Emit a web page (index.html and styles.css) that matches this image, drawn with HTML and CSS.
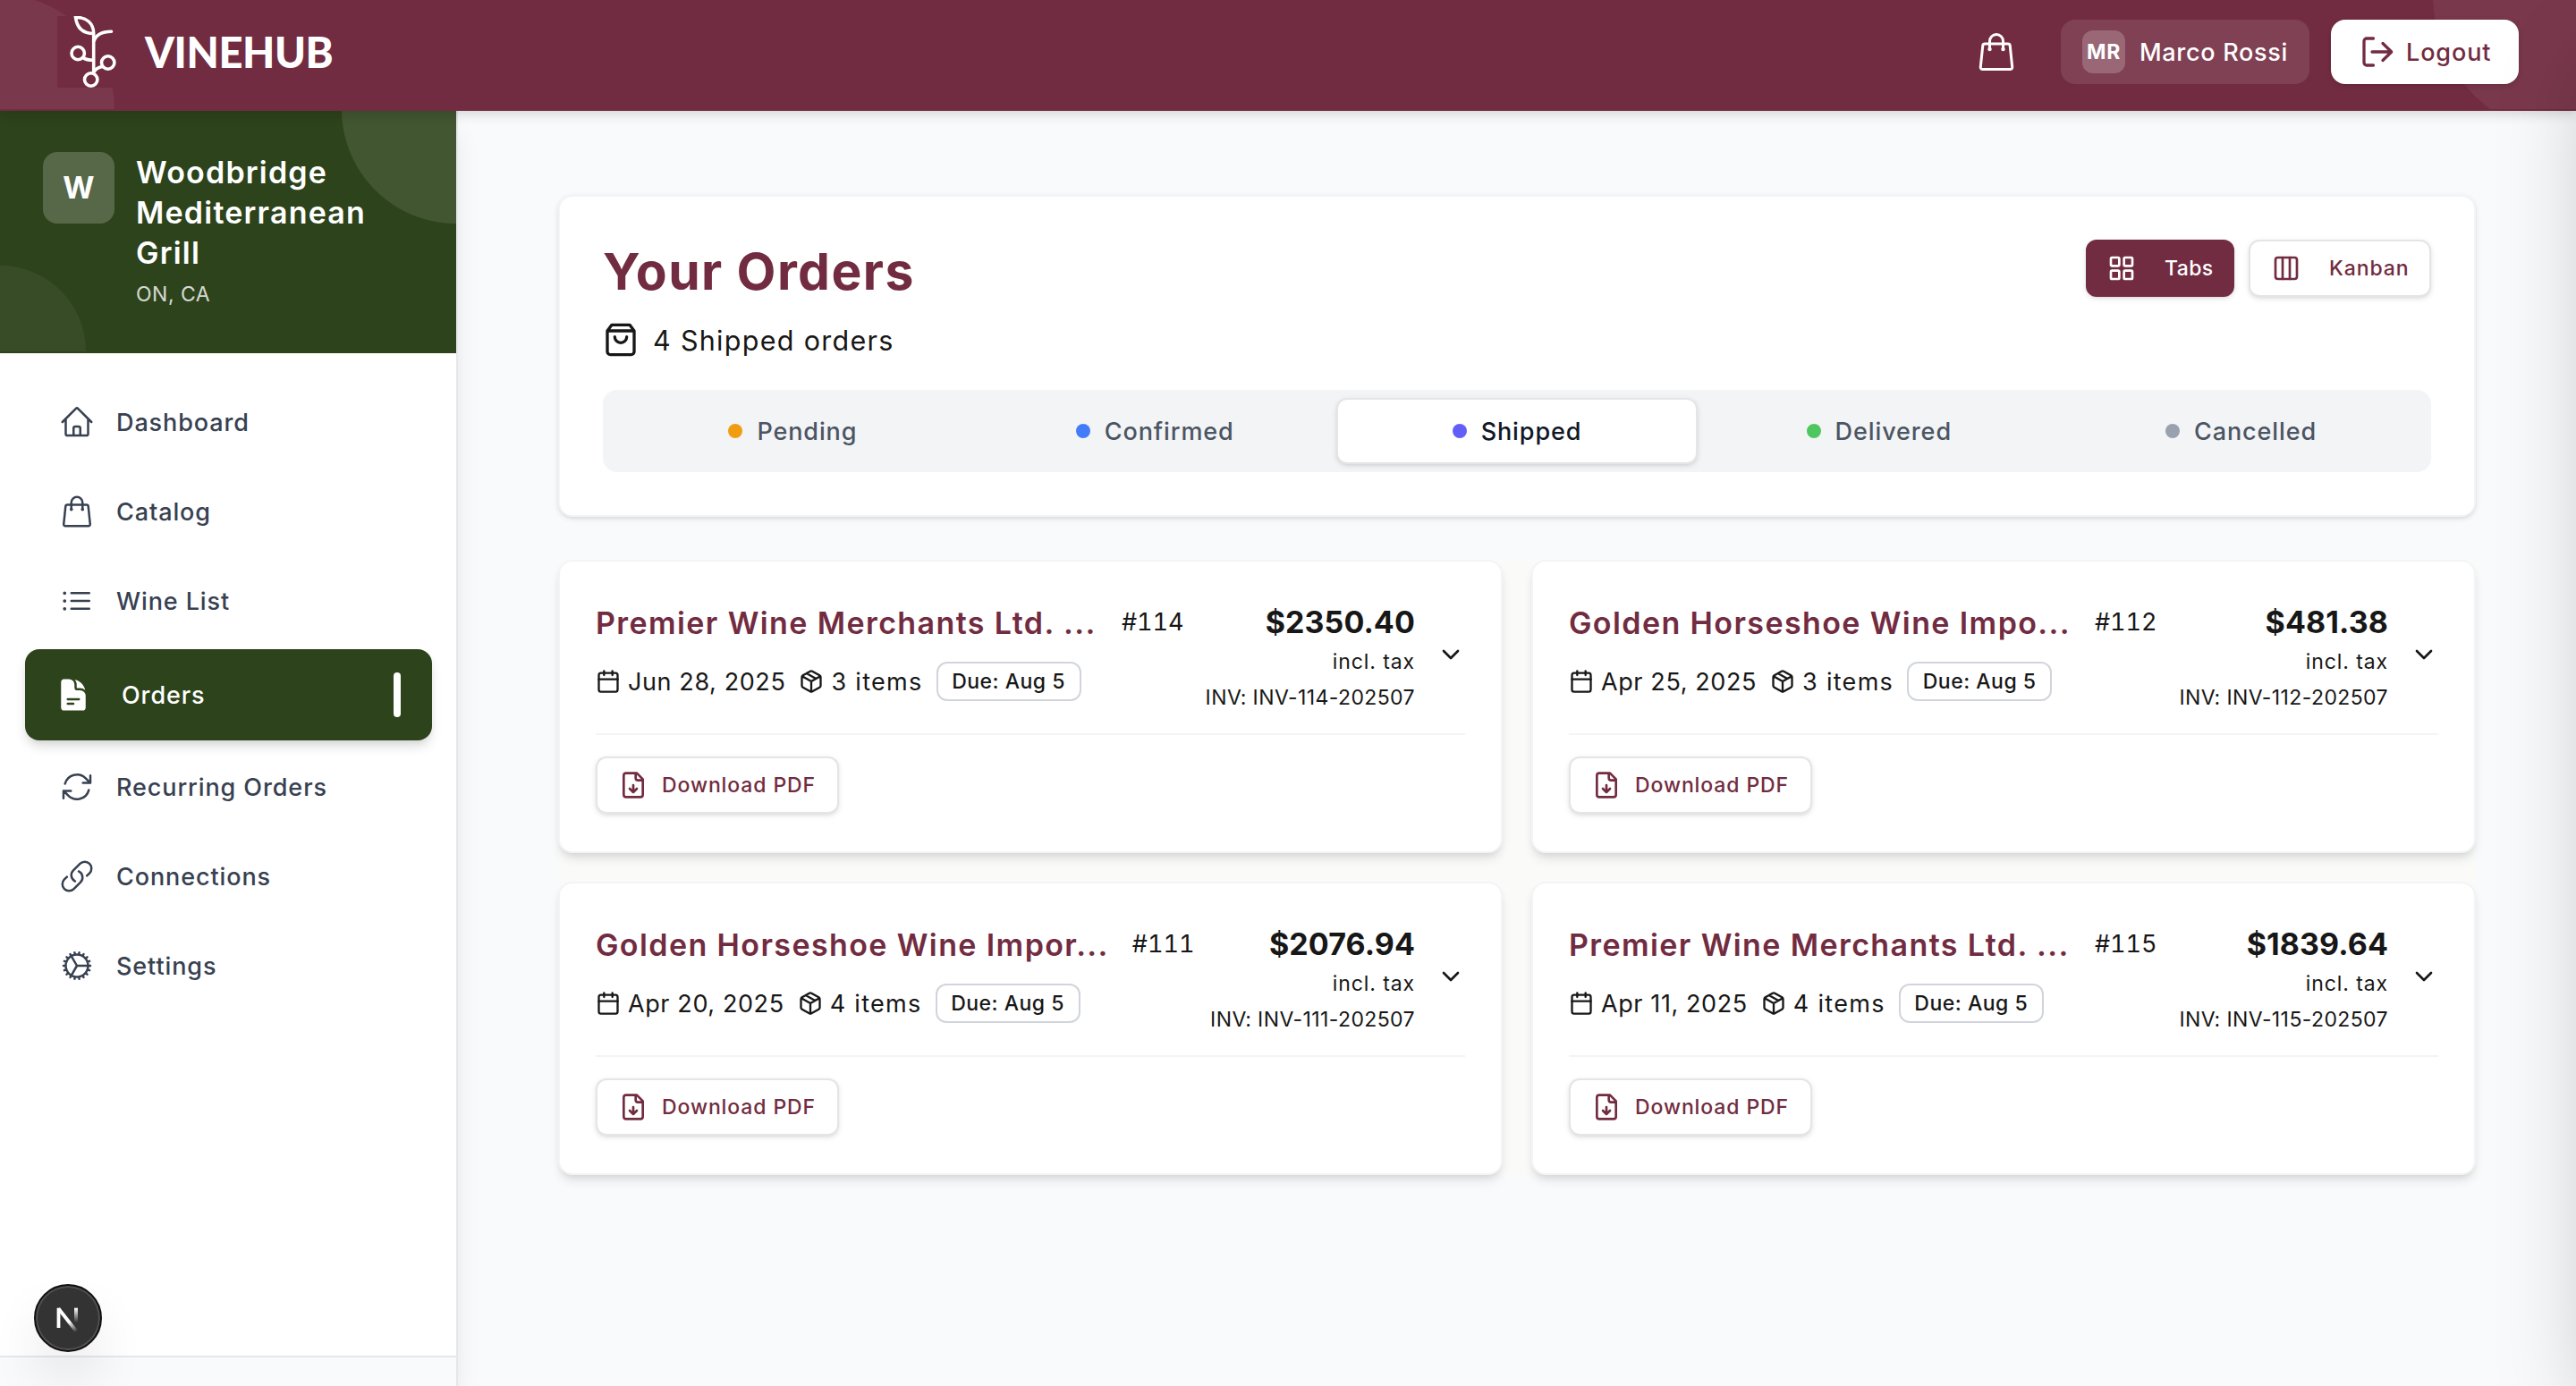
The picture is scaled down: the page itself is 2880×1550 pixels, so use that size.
FILE: index.html
```html
<!DOCTYPE html>
<html lang="en">
<head>
  <meta charset="UTF-8" />
  <meta name="viewport" content="width=device-width, initial-scale=1.0"/>
  <title>VineHub - Your Orders</title>
  <link rel="stylesheet" href="styles.css">
</head>
<body>
  <!-- shared icons -->
  <svg class="sprite" aria-hidden="true">
    <symbol id="i-bag" viewBox="0 0 24 24"><path d="M15.75 10.5V6a3.75 3.75 0 1 0-7.5 0v4.5m11.356-1.993 1.263 12c.07.665-.45 1.243-1.119 1.243H4.25a1.125 1.125 0 0 1-1.12-1.243l1.264-12A1.125 1.125 0 0 1 5.513 7.5h12.974c.576 0 1.059.435 1.119 1.007ZM8.625 10.5a.375.375 0 1 1-.75 0 .375.375 0 0 1 .75 0Zm7.5 0a.375.375 0 1 1-.75 0 .375.375 0 0 1 .75 0Z"/></symbol>
    <symbol id="i-calendar" viewBox="0 0 24 24"><path d="M8 2v4M16 2v4M3 10h18"/><rect x="3" y="4" width="18" height="18" rx="2"/></symbol>
    <symbol id="i-package" viewBox="0 0 24 24"><path d="M11 21.73a2 2 0 0 0 2 0l7-4A2 2 0 0 0 21 16V8a2 2 0 0 0-1-1.73l-7-4a2 2 0 0 0-2 0l-7 4A2 2 0 0 0 3 8v8a2 2 0 0 0 1 1.73zM12 22V12M3.3 7l8.7 5 8.7-5M7.5 4.27l9 5.15"/></symbol>
    <symbol id="i-chevron" viewBox="0 0 24 24"><path d="m6 9 6 6 6-6"/></symbol>
    <symbol id="i-file-down" viewBox="0 0 24 24"><path d="M15 2H6a2 2 0 0 0-2 2v16a2 2 0 0 0 2 2h12a2 2 0 0 0 2-2V7ZM14 2v4a2 2 0 0 0 2 2h4M12 18v-6M9 15l3 3 3-3"/></symbol>
  </svg>

  <header class="topbar">
    <div class="brand">
      <svg class="brand-logo" viewBox="0 0 80 80">
        <path d="M20.5 1.5C22 13 29 19.5 40.7 19.5 40.7 8 32.5 1 20.5 1.5ZM40.7 19V63M40.7 29C43 21 50 17.3 60.5 17.3M29 46.5C32 49 36 49.3 40.7 49.3M50.5 56.5C47 57 43 59 41 62.5"/>
        <circle cx="23.2" cy="41.5" r="7.2"/>
        <circle cx="56.7" cy="52" r="7.2"/>
        <circle cx="37.7" cy="71" r="7.2"/>
      </svg>
      <span class="brand-name">VINEHUB</span>
    </div>
    <div class="topbar-actions">
      <svg class="icon thin cart"><use href="#i-bag"/></svg>
      <div class="user">
        <span class="user-badge">MR</span>
        <span>Marco Rossi</span>
      </div>
      <button class="logout">
        <svg class="logout-icon" viewBox="0 0 40 40"><path d="M15.5 5H8a3 3 0 0 0-3 3v24a3 3 0 0 0 3 3h7.5M14 20h21.5M26 10.5l9.7 9.5-9.7 9.5"/></svg>
        Logout
      </button>
    </div>
  </header>

  <div class="layout">
    <aside class="sidebar">
      <div class="profile">
        <div class="avatar">W</div>
        <div>
          <div class="profile-name">Woodbridge<br>Mediterranean<br>Grill</div>
          <div class="profile-place">ON, CA</div>
        </div>
      </div>
      <nav class="nav">
        <a class="nav-item">
          <svg class="icon thin" viewBox="0 0 24 24"><path d="m2.25 12 8.954-8.955c.44-.439 1.152-.439 1.591 0L21.75 12M4.5 9.75v10.125c0 .621.504 1.125 1.125 1.125H9.75v-4.875c0-.621.504-1.125 1.125-1.125h2.25c.621 0 1.125.504 1.125 1.125V21h4.125c.621 0 1.125-.504 1.125-1.125V9.75M8.25 21h8.25"/></svg>
          Dashboard
        </a>
        <a class="nav-item">
          <svg class="icon thin"><use href="#i-bag"/></svg>
          Catalog
        </a>
        <a class="nav-item">
          <svg class="icon thin" viewBox="0 0 24 24"><path d="M8.25 6.75h12M8.25 12h12m-12 5.25h12M3.75 6.75h.007v.008H3.75V6.75Zm.375 0a.375.375 0 1 1-.75 0 .375.375 0 0 1 .75 0ZM3.75 12h.007v.008H3.75V12Zm.375 0a.375.375 0 1 1-.75 0 .375.375 0 0 1 .75 0Zm-.375 5.25h.007v.008H3.75v-.008Zm.375 0a.375.375 0 1 1-.75 0 .375.375 0 0 1 .75 0Z"/></svg>
          Wine List
        </a>
        <a class="nav-item active">
          <svg class="icon solid" viewBox="0 0 24 24">
            <path fill-rule="evenodd" d="M5.625 1.5c-1.036 0-1.875.84-1.875 1.875v17.25c0 1.035.84 1.875 1.875 1.875h12.75c1.035 0 1.875-.84 1.875-1.875V12.75A3.75 3.75 0 0 0 16.5 9h-1.875a1.875 1.875 0 0 1-1.875-1.875V5.25A3.75 3.75 0 0 0 9 1.5H5.625ZM7.5 15a.75.75 0 0 1 .75-.75h7.5a.75.75 0 0 1 0 1.5h-7.5A.75.75 0 0 1 7.5 15Zm.75 2.25a.75.75 0 0 0 0 1.5H12a.75.75 0 0 0 0-1.5H8.25Z"/>
            <path d="M12.971 1.816A5.23 5.23 0 0 1 14.25 5.25v1.875c0 .207.168.375.375.375H16.5a5.23 5.23 0 0 1 3.434 1.279 9.768 9.768 0 0 0-6.963-6.963Z"/>
          </svg>
          Orders
          <span class="nav-mark"></span>
        </a>
        <a class="nav-item">
          <svg class="icon thin" viewBox="0 0 24 24"><path d="M16.023 9.348h4.992v-.001M2.985 19.644v-4.992m0 0h4.992m-4.993 0 3.181 3.183a8.25 8.25 0 0 0 13.803-3.7M4.031 9.865a8.25 8.25 0 0 1 13.803-3.7l3.181 3.182m0-4.991v4.99"/></svg>
          Recurring Orders
        </a>
        <a class="nav-item">
          <svg class="icon thin" viewBox="0 0 24 24"><path d="M13.19 8.688a4.5 4.5 0 0 1 1.242 7.244l-4.5 4.5a4.5 4.5 0 0 1-6.364-6.364l1.757-1.757m13.35-.622 1.757-1.757a4.5 4.5 0 0 0-6.364-6.364l-4.5 4.5a4.5 4.5 0 0 0 1.242 7.244"/></svg>
          Connections
        </a>
        <a class="nav-item">
          <svg class="icon thin" viewBox="0 0 24 24"><path d="M4.5 12a7.5 7.5 0 0 0 15 0m-15 0a7.5 7.5 0 1 1 15 0m-15 0H3m16.5 0H21m-1.5 0H12m-8.457 3.077 1.41-.513m14.095-5.13 1.41-.513M5.106 17.785l1.15-.964m11.49-9.642 1.149-.964M7.501 19.795l.75-1.3m7.5-12.99.75-1.3m-6.063 16.658.26-1.477m2.605-14.772.26-1.477m0 17.726-.26-1.477M10.698 4.614l-.26-1.477M16.5 19.794l-.75-1.299M7.5 4.205 12 12m6.894 5.785-1.149-.964M6.256 7.178l-1.15-.964m15.352 8.864-1.41-.513M4.954 9.435l-1.41-.514M12.002 12l-3.75 6.495"/></svg>
          Settings
        </a>
      </nav>
      <div class="sidebar-foot"></div>
    </aside>

    <main class="content">
      <section class="panel">
        <div class="panel-head">
          <h1>Your Orders</h1>
          <div class="view-switch">
            <button class="btn btn-primary">
              <svg class="icon" viewBox="0 0 24 24"><rect x="3" y="3" width="7" height="7" rx="1"/><rect x="14" y="3" width="7" height="7" rx="1"/><rect x="14" y="14" width="7" height="7" rx="1"/><rect x="3" y="14" width="7" height="7" rx="1"/></svg>
              Tabs
            </button>
            <button class="btn">
              <svg class="icon" viewBox="0 0 24 24"><rect x="3" y="3" width="18" height="18" rx="2"/><path d="M9 3v18M15 3v18"/></svg>
              Kanban
            </button>
          </div>
        </div>
        <p class="summary">
          <svg class="icon" viewBox="0 0 24 24"><path d="M6 2 3 6v14a2 2 0 0 0 2 2h14a2 2 0 0 0 2-2V6l-3-4ZM3 6h18M16 10a4 4 0 0 1-8 0"/></svg>
          4 Shipped orders
        </p>
        <div class="tabs">
          <div class="tab"><span class="dot pending"></span>Pending</div>
          <div class="tab"><span class="dot confirmed"></span>Confirmed</div>
          <div class="tab selected"><span class="dot shipped"></span>Shipped</div>
          <div class="tab"><span class="dot delivered"></span>Delivered</div>
          <div class="tab"><span class="dot cancelled"></span>Cancelled</div>
        </div>
      </section>

      <section class="orders">
        <article class="order">
          <div class="order-head">
            <div class="order-info">
              <div class="order-title"><h2>Premier Wine Merchants Ltd. ...</h2><span class="order-id">#114</span></div>
              <div class="order-meta">
                <span class="meta"><svg class="icon"><use href="#i-calendar"/></svg>Jun 28, 2025</span>
                <span class="meta count"><svg class="icon"><use href="#i-package"/></svg>3 items</span>
                <span class="due">Due: Aug 5</span>
              </div>
            </div>
            <div class="order-total">
              <div class="price">$2350.40</div>
              <div class="note">incl. tax</div>
              <div class="note invoice">INV: INV-114-202507</div>
            </div>
            <svg class="icon chevron"><use href="#i-chevron"/></svg>
          </div>
          <div class="order-foot">
            <button class="btn btn-pdf"><svg class="icon"><use href="#i-file-down"/></svg>Download PDF</button>
          </div>
        </article>

        <article class="order">
          <div class="order-head">
            <div class="order-info">
              <div class="order-title"><h2>Golden Horseshoe Wine Impo...</h2><span class="order-id">#112</span></div>
              <div class="order-meta">
                <span class="meta"><svg class="icon"><use href="#i-calendar"/></svg>Apr 25, 2025</span>
                <span class="meta count"><svg class="icon"><use href="#i-package"/></svg>3 items</span>
                <span class="due">Due: Aug 5</span>
              </div>
            </div>
            <div class="order-total">
              <div class="price">$481.38</div>
              <div class="note">incl. tax</div>
              <div class="note invoice">INV: INV-112-202507</div>
            </div>
            <svg class="icon chevron"><use href="#i-chevron"/></svg>
          </div>
          <div class="order-foot">
            <button class="btn btn-pdf"><svg class="icon"><use href="#i-file-down"/></svg>Download PDF</button>
          </div>
        </article>

        <article class="order">
          <div class="order-head">
            <div class="order-info">
              <div class="order-title"><h2>Golden Horseshoe Wine Impor...</h2><span class="order-id">#111</span></div>
              <div class="order-meta">
                <span class="meta"><svg class="icon"><use href="#i-calendar"/></svg>Apr 20, 2025</span>
                <span class="meta count"><svg class="icon"><use href="#i-package"/></svg>4 items</span>
                <span class="due">Due: Aug 5</span>
              </div>
            </div>
            <div class="order-total">
              <div class="price">$2076.94</div>
              <div class="note">incl. tax</div>
              <div class="note invoice">INV: INV-111-202507</div>
            </div>
            <svg class="icon chevron"><use href="#i-chevron"/></svg>
          </div>
          <div class="order-foot">
            <button class="btn btn-pdf"><svg class="icon"><use href="#i-file-down"/></svg>Download PDF</button>
          </div>
        </article>

        <article class="order">
          <div class="order-head">
            <div class="order-info">
              <div class="order-title"><h2>Premier Wine Merchants Ltd. ...</h2><span class="order-id">#115</span></div>
              <div class="order-meta">
                <span class="meta"><svg class="icon"><use href="#i-calendar"/></svg>Apr 11, 2025</span>
                <span class="meta count"><svg class="icon"><use href="#i-package"/></svg>4 items</span>
                <span class="due">Due: Aug 5</span>
              </div>
            </div>
            <div class="order-total">
              <div class="price">$1839.64</div>
              <div class="note">incl. tax</div>
              <div class="note invoice">INV: INV-115-202507</div>
            </div>
            <svg class="icon chevron"><use href="#i-chevron"/></svg>
          </div>
          <div class="order-foot">
            <button class="btn btn-pdf"><svg class="icon"><use href="#i-file-down"/></svg>Download PDF</button>
          </div>
        </article>
      </section>
    </main>
  </div>

  <!-- closed cart drawer, only its shadow reaches the page -->
  <div class="drawer"></div>

  <div class="dev-badge">
    <svg viewBox="0 0 72 72">
      <defs>
        <linearGradient id="fade-a" gradientUnits="userSpaceOnUse" x1="38" y1="40" x2="46" y2="51"><stop stop-color="#fff"/><stop offset="1" stop-color="#fff" stop-opacity="0"/></linearGradient>
        <linearGradient id="fade-b" gradientUnits="userSpaceOnUse" x1="45" y1="25" x2="45" y2="41"><stop stop-color="#fff"/><stop offset="1" stop-color="#fff" stop-opacity="0"/></linearGradient>
      </defs>
      <line x1="25.5" y1="24.7" x2="25.5" y2="47" stroke="#fff"/>
      <line x1="25.5" y1="25.5" x2="45.5" y2="51" stroke="url(#fade-a)"/>
      <rect x="43" y="24.7" width="4" height="17" fill="url(#fade-b)"/>
    </svg>
  </div>
</body>
</html>
```
FILE: styles.css
```css
* {
  box-sizing: border-box;
}

body {
  margin: 0;
  height: 1550px;
  display: flex;
  flex-direction: column;
  overflow: hidden;
  font-family: Inter, "Open Sans", sans-serif;
  font-size: 27px;
  letter-spacing: 0.9px;
  color: #171717;
  background: #f9fafc;
}

h1, h2, p {
  margin: 0;
}

button {
  font: inherit;
  letter-spacing: inherit;
  border: none;
}

.sprite {
  position: absolute;
  width: 0;
  height: 0;
}

.icon {
  flex: none;
  width: 32px;
  height: 32px;
  fill: none;
  stroke: currentColor;
  stroke-width: 2;
  stroke-linecap: round;
  stroke-linejoin: round;
}

.icon.thin {
  width: 40px;
  height: 40px;
  stroke-width: 1.5;
}

.icon.solid {
  width: 40px;
  height: 40px;
  fill: currentColor;
  stroke: none;
}

/* top bar */
.topbar {
  position: relative;
  z-index: 2;
  flex: none;
  height: 124px;
  padding: 0 64px 8px;
  display: flex;
  align-items: center;
  justify-content: space-between;
  color: #fff;
  background: #722c41;
  box-shadow: 0 4px 12px rgba(0, 0, 0, 0.15);
}

.topbar::before,
.topbar::after {
  content: "";
  position: absolute;
  z-index: -1;
  bottom: 2px;
  height: 122px;
  background: rgba(255, 255, 255, 0.06);
}

.topbar::before {
  left: 0;
  width: 128px;
  clip-path: circle(128px at 0 122px);
}

.topbar::after {
  right: 0;
  width: 160px;
  clip-path: circle(160px at 160px -6px);
}

.brand {
  display: flex;
  align-items: center;
  gap: 18px;
}

.brand-logo {
  width: 80px;
  height: 80px;
  background: #722c41;
  fill: none;
  stroke: #fff;
  stroke-width: 3.6;
  stroke-linecap: round;
}

.brand-name {
  font-family: Lato, sans-serif;
  font-size: 47px;
  font-weight: 900;
  letter-spacing: -0.4px;
}

.topbar-actions {
  display: flex;
  align-items: center;
  gap: 24px;
  font-weight: 500;
}

.icon.cart {
  width: 48px;
  height: 48px;
  margin-right: 24px;
}

.user {
  width: 278px;
  height: 72px;
  padding-left: 24px;
  display: flex;
  align-items: center;
  gap: 16px;
  border-radius: 16px;
  background: rgba(255, 255, 255, 0.1);
  letter-spacing: 0.7px;
}

.user-badge {
  width: 48px;
  height: 48px;
  border-radius: 12px;
  background: rgba(255, 255, 255, 0.2);
  font-size: 23px;
  font-weight: 700;
  line-height: 48px;
  text-align: center;
}

.logout {
  width: 210px;
  height: 72px;
  padding: 0 0 0 32px;
  display: flex;
  align-items: center;
  gap: 12px;
  border-radius: 16px;
  background: #fff;
  color: #722c41;
  box-shadow: 0 2px 6px rgba(0, 0, 0, 0.15);
}

.logout-icon {
  width: 40px;
  height: 40px;
  fill: none;
  stroke: currentColor;
  stroke-width: 3.3;
  stroke-linecap: round;
  stroke-linejoin: round;
}

.layout {
  flex: 1;
  display: flex;
}

/* sidebar */
.sidebar {
  flex: none;
  width: 512px;
  display: flex;
  flex-direction: column;
  background: #fff;
  border-right: 2px solid #e5e7eb;
  box-shadow: 0 20px 30px -6px rgba(0, 0, 0, 0.1), 0 8px 12px -8px rgba(0, 0, 0, 0.1);
}

.profile {
  height: 271px;
  padding: 46px 0 0 48px;
  display: flex;
  gap: 24px;
  color: #fff;
  background:
    radial-gradient(circle at 510px -2px, rgba(255, 255, 255, 0.1) 127.5px, transparent 128.5px),
    linear-gradient(#2d431b, #2d431b) 0 269px / 100% 2px no-repeat,
    radial-gradient(circle at 0 269px, rgba(255, 255, 255, 0.05) 95.5px, transparent 96.5px),
    #2d431b;
}

.avatar {
  width: 80px;
  height: 80px;
  border-radius: 16px;
  background: rgba(255, 255, 255, 0.2);
  font-size: 34px;
  font-weight: 700;
  line-height: 80px;
  letter-spacing: 0;
  text-align: center;
}

.profile-name {
  font-size: 34px;
  font-weight: 600;
  line-height: 45px;
  letter-spacing: 1.2px;
}

.profile-place {
  margin-top: 8px;
  font-size: 23px;
  line-height: 32px;
  letter-spacing: 0.5px;
  opacity: 0.8;
}

.nav {
  flex: 1;
  padding: 28px 27px 0 28px;
}

.nav-item {
  height: 100px;
  padding: 0 0 2px 38px;
  display: flex;
  align-items: center;
  gap: 24px;
  font-weight: 500;
  color: #374151;
}

.nav-item.active {
  height: 102px;
  margin: 3px 0;
  padding: 0 35px 0 34px;
  gap: 34px;
  border-radius: 16px;
  color: #fff;
  background: #2d431b;
  box-shadow: 0 8px 14px -2px rgba(0, 0, 0, 0.14), 0 4px 8px -4px rgba(0, 0, 0, 0.1);
}

.nav-mark {
  width: 8px;
  height: 50px;
  margin-left: auto;
  border-radius: 4px;
  background: #fff;
}

.sidebar-foot {
  height: 34px;
  border-top: 2px solid #e5e7eb;
  background: #f9fafc;
}

/* content */
.content {
  flex: 1;
  padding: 94px 112px 0;
}

.panel {
  height: 360px;
  padding: 48px;
  border: 2px solid #f3f4f6;
  border-radius: 16px;
  background: #fff;
  box-shadow: 0 2px 6px rgba(0, 0, 0, 0.1), 0 2px 4px -2px rgba(0, 0, 0, 0.1);
}

.panel-head {
  display: flex;
  justify-content: space-between;
}

h1 {
  font-size: 57px;
  font-weight: 700;
  line-height: 72px;
  letter-spacing: 1.4px;
  color: #722c41;
}

.view-switch {
  display: flex;
  gap: 16px;
}

.btn {
  width: 204px;
  height: 64px;
  padding: 0 0 0 24px;
  display: flex;
  align-items: center;
  gap: 32px;
  border: 2px solid #e5e5e5;
  border-radius: 12px;
  background: #fff;
  color: #722c41;
  font-size: 23px;
  font-weight: 500;
  box-shadow: 0 2px 6px rgba(0, 0, 0, 0.1), 0 2px 4px -2px rgba(0, 0, 0, 0.1);
}

.btn-primary {
  width: 166px;
  padding-left: 22px;
  border-color: #722c41;
  background: #722c41;
  color: #fff;
  letter-spacing: 0.4px;
}

.btn-pdf {
  width: 272px;
  gap: 16px;
}

.summary {
  margin-top: 20px;
  height: 40px;
  display: flex;
  align-items: center;
  gap: 16px;
  font-size: 30.5px;
  letter-spacing: 1.3px;
}

.summary .icon {
  width: 40px;
  height: 40px;
}

.tabs {
  margin-top: 36px;
  height: 92px;
  padding: 9px 10px;
  display: grid;
  grid-template-columns: repeat(5, 1fr);
  border-radius: 16px;
  background: #f3f4f6;
}

.tab {
  display: flex;
  align-items: center;
  justify-content: center;
  gap: 16px;
  font-weight: 500;
  color: #4b5563;
}

.tab.selected {
  border: 2px solid #e5e5e5;
  border-radius: 12px;
  background: #fff;
  color: #111827;
  box-shadow: 0 2px 6px rgba(0, 0, 0, 0.1), 0 2px 4px -2px rgba(0, 0, 0, 0.1);
}

.dot {
  width: 16px;
  height: 16px;
  border-radius: 50%;
}

.pending { background: #f09d12; }
.confirmed { background: #427cfb; }
.shipped { background: #625ff8; }
.delivered { background: #4fc75f; }
.cancelled { background: #99a1af; }

/* order cards */
.orders {
  margin-top: 48px;
  display: grid;
  grid-template-columns: 1fr 1fr;
  gap: 32px;
  background: #fafaf9;
}

.order {
  height: 328px;
  padding: 40px;
  border: 2px solid #f3f4f6;
  border-radius: 16px;
  background: #fff;
  box-shadow: 0 8px 12px -2px rgba(0, 0, 0, 0.1), 0 4px 8px -4px rgba(0, 0, 0, 0.1);
}

.order-head {
  height: 154px;
  padding-bottom: 24px;
  display: flex;
  border-bottom: 2px solid #f3f4f6;
}

.order-info {
  flex: 1;
}

.order-title {
  height: 56px;
  display: flex;
  align-items: center;
  gap: 26px;
  white-space: nowrap;
}

h2 {
  min-width: 562px;
  font-size: 34px;
  font-weight: 600;
  letter-spacing: 1.4px;
  color: #722c41;
}

.order-id {
  padding-bottom: 2px;
  font-variant-numeric: tabular-nums;
  letter-spacing: 0;
}

.order-meta {
  margin-top: 16px;
  display: flex;
  align-items: center;
  gap: 15px;
}

.meta {
  display: flex;
  align-items: center;
  gap: 8px;
  letter-spacing: 0.6px;
}

.meta.count {
  letter-spacing: 1.3px;
}

.meta .icon {
  width: 28px;
  height: 28px;
}

.due {
  width: 162px;
  height: 44px;
  border: 2px solid #d1d5db;
  border-radius: 12px;
  font-size: 23px;
  font-weight: 500;
  line-height: 40px;
  letter-spacing: 0.5px;
  text-align: center;
}

.order-total {
  margin-right: 24px;
  text-align: right;
}

.price {
  font-size: 34px;
  font-weight: 700;
  line-height: 56px;
  letter-spacing: 0.1px;
}

.note {
  font-size: 23px;
  line-height: 32px;
}

.invoice {
  margin-top: 8px;
  letter-spacing: 0.4px;
}

.chevron {
  align-self: center;
}

.order-foot {
  padding-top: 24px;
}

/* overlays */
.drawer {
  position: fixed;
  z-index: 3;
  top: 0;
  left: 100%;
  width: 900px;
  height: 100%;
  box-shadow: 0 50px 100px -24px rgba(0, 0, 0, 0.25);
}

.dev-badge {
  position: fixed;
  z-index: 4;
  left: 38px;
  bottom: 38px;
  width: 76px;
  height: 76px;
  border: 2px solid #111;
  border-radius: 50%;
  background: #333;
  box-shadow: inset 0 0 0 2px #505050, 0 32px 64px -16px rgba(0, 0, 0, 0.24);
}

.dev-badge svg {
  display: block;
  stroke-width: 3.8;
}
```
